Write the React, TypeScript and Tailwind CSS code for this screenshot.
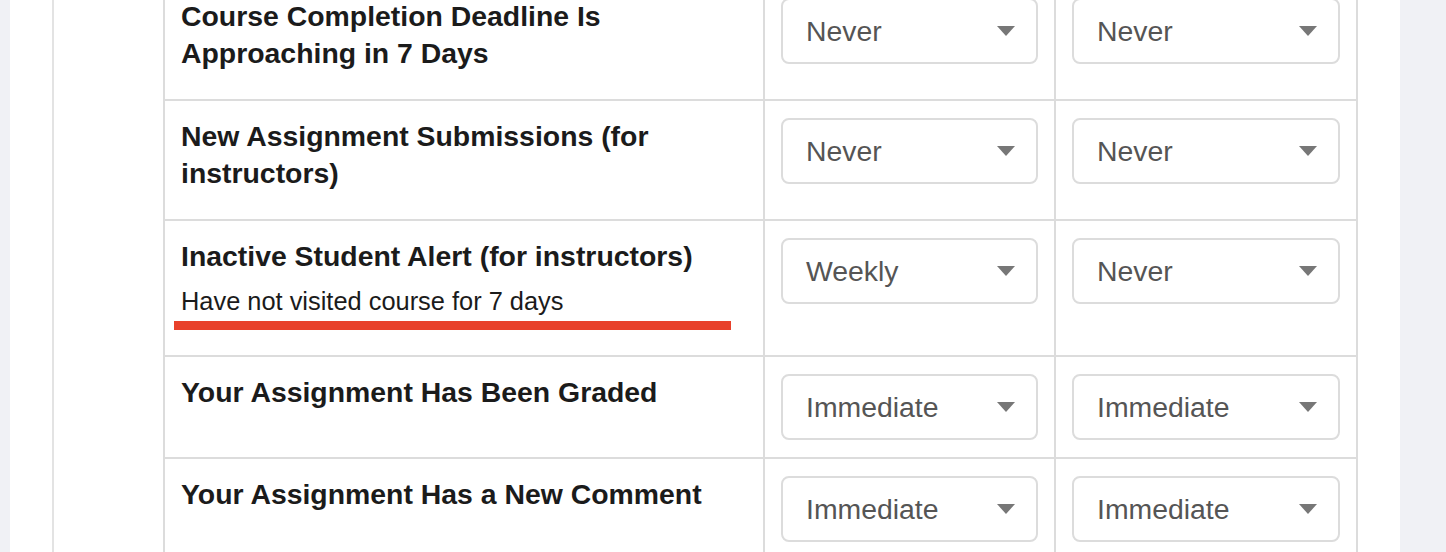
import React from "react";

type Row = {
  title: React.ReactNode;
  note?: string;
  email: string;
  web: string;
};

const rows: Row[] = [
  {
    title: (
      <>
        Course Completion Deadline Is
        <br />
        Approaching in 7 Days
      </>
    ),
    email: "Never",
    web: "Never",
  },
  {
    title: (
      <>
        New Assignment Submissions (for
        <br />
        instructors)
      </>
    ),
    email: "Never",
    web: "Never",
  },
  {
    title: "Inactive Student Alert (for instructors)",
    note: "Have not visited course for 7 days",
    email: "Weekly",
    web: "Never",
  },
  { title: "Your Assignment Has Been Graded", email: "Immediate", web: "Immediate" },
  { title: "Your Assignment Has a New Comment", email: "Immediate", web: "Immediate" },
];

function Select({ value }: { value: string }) {
  return (
    <div className="flex h-[66px] w-full items-center justify-between rounded-[8px] border-2 border-[#dcdcdc] bg-white pl-[23px] pr-[21px] text-[28.4px] leading-none text-[#555]">
      <span>{value}</span>
      <svg width="18" height="10" viewBox="0 0 18 10">
        <path d="M0 0 H18 L9 10 Z" fill="#777" />
      </svg>
    </div>
  );
}

export default function App() {
  return (
    <div className="h-[552px] overflow-hidden bg-[#f0f1f5] font-['Liberation_Sans',Arial,sans-serif]">
      <div className="ml-[10px] h-full w-[1390px] bg-white pl-[42px]">
        <div className="flex h-full flex-col border-l-2 border-[#e3e3e3] pl-[109px]">
          <div className="-mt-[19px] w-[1195px] border-l-2 border-[#dcdcdc]">
            {rows.map((row, i) => (
              <div key={i} className="flex border-b-2 border-[#dcdcdc]">
                <div className="w-[600px] border-r-2 border-[#dcdcdc] px-4 pt-[17px] pb-[19px] text-[#1b1b1b]">
                  <div className="mb-2 text-[28.4px] font-bold leading-[37px]">{row.title}</div>
                  {row.note && (
                    <>
                      <div className="text-[25.4px] leading-[36px]">{row.note}</div>
                      <div className="ml-[-7px] mt-[2px] mb-[6px] h-[9px] w-[557px] bg-[#e8412b]" />
                    </>
                  )}
                </div>
                <div className="w-[291px] border-r-2 border-[#dcdcdc] px-4 pt-[17px] pb-[17px]">
                  <Select value={row.email} />
                </div>
                <div className="w-[302px] border-r-2 border-[#dcdcdc] px-4 pt-[17px] pb-[17px]">
                  <Select value={row.web} />
                </div>
              </div>
            ))}
          </div>
        </div>
      </div>
    </div>
  );
}
